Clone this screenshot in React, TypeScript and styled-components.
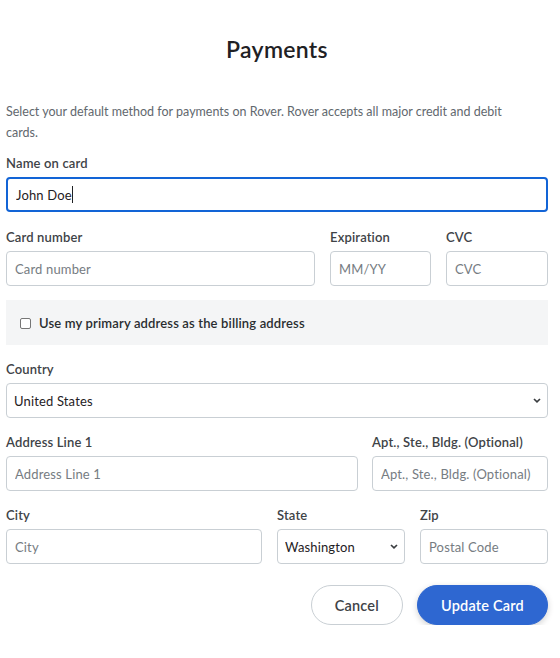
import React from 'react';
import styled, { createGlobalStyle } from 'styled-components';

const GlobalStyle = createGlobalStyle`
  html, body {
    margin: 0;
    padding: 0;
    background: #ffffff;
  }
  body {
    font-family: Lato, 'Open Sans', sans-serif;
    color: #404347;
  }
  * {
    box-sizing: border-box;
  }
`;

const Page = styled.div`
  width: 560px;
  padding: 34px 12px 0 6px;
`;

const Title = styled.h1`
  margin: 0;
  font-size: 23px;
  line-height: 30px;
  font-weight: 600;
  color: #1f2124;
  text-align: center;
  letter-spacing: 0.3px;
`;

const Description = styled.p`
  margin: 37px 0 10px;
  max-width: 500px;
  font-size: 12.5px;
  line-height: 21px;
  color: #62686e;
`;

const Form = styled.form`
  display: flex;
  flex-direction: column;
  gap: 14px;
`;

const Row = styled.div<{ $cols: string; $gap?: number }>`
  display: grid;
  grid-template-columns: ${p => p.$cols};
  column-gap: ${p => p.$gap ?? 15}px;
`;

const Field = styled.div<{ $after?: number }>`
  display: flex;
  flex-direction: column;
  min-width: 0;
  margin-bottom: ${p => p.$after ?? 0}px;
`;

const Label = styled.label`
  font-size: 13px;
  line-height: 20px;
  font-weight: 600;
  letter-spacing: 0.15px;
  color: #404347;
  margin-bottom: 4px;
  white-space: nowrap;
`;

const InputWrap = styled.div`
  position: relative;
`;

const Input = styled.input<{ $active?: boolean }>`
  width: 100%;
  height: 35px;
  padding: 0 8px;
  font-family: Lato, 'Open Sans', sans-serif;
  font-size: 13px;
  letter-spacing: 0.15px;
  color: #1f2124;
  background: #fff;
  border: ${p => (p.$active ? '2px solid #1264d6' : '1px solid #c9cfd4')};
  border-radius: 4px;
  outline: none;
  &::placeholder {
    color: #767c82;
  }
`;

const Caret = styled.span`
  position: absolute;
  left: 66px;
  top: 9px;
  width: 1px;
  height: 17px;
  background: #1f2124;
`;

const Select = styled.select`
  width: 100%;
  height: 35px;
  padding: 0 24px 0 7px;
  font-family: Lato, 'Open Sans', sans-serif;
  font-size: 13px;
  letter-spacing: 0.15px;
  color: #1f2124;
  background: #fff;
  border: 1px solid #c9cfd4;
  border-radius: 4px;
  appearance: none;
  outline: none;
`;

const Chevron = styled.svg`
  position: absolute;
  right: 7px;
  top: 15px;
  pointer-events: none;
`;

const BillingBox = styled.div`
  display: flex;
  align-items: center;
  gap: 8px;
  height: 45px;
  padding: 0 14px;
  background: #f4f5f6;
`;

const Checkbox = styled.span`
  width: 11px;
  height: 11px;
  border: 1px solid #767676;
  border-radius: 2px;
  background: #fff;
  flex: none;
  margin-top: 2px;
`;

const CheckText = styled.span`
  font-size: 13px;
  font-weight: 600;
  letter-spacing: 0.15px;
  color: #2a2d30;
`;

const Actions = styled.div`
  display: flex;
  justify-content: flex-end;
  gap: 14px;
  margin-top: 7px;
`;

const Button = styled.button<{ $primary?: boolean }>`
  height: 40px;
  padding: 0 23px;
  border-radius: 20px;
  font-family: Lato, 'Open Sans', sans-serif;
  font-size: 14.5px;
  font-weight: 600;
  letter-spacing: 0.2px;
  border: 1px solid ${p => (p.$primary ? '#2e67d1' : '#c9cfd4')};
  background: ${p => (p.$primary ? '#2e67d1' : '#ffffff')};
  color: ${p => (p.$primary ? '#ffffff' : '#404347')};
  box-shadow: ${p => (p.$primary ? '0 2px 6px rgba(0,0,0,0.18)' : 'none')};
`;

const SelectField: React.FC<{ value: string }> = ({ value }) => (
  <InputWrap>
    <Select defaultValue={value}>
      <option>{value}</option>
    </Select>
    <Chevron width="8" height="5" viewBox="0 0 8 5">
      <path d="M1 1 L4 3.8 L7 1" fill="none" stroke="#3a3d40" strokeWidth="1.7" />
    </Chevron>
  </InputWrap>
);

export default function App() {
  return (
    <Page>
      <GlobalStyle />
      <Title>Payments</Title>
      <Description>
        Select your default method for payments on Rover. Rover accepts all major credit and debit cards.
      </Description>
      <Form onSubmit={e => e.preventDefault()}>
        <Field $after={1}>
          <Label>Name on card</Label>
          <InputWrap>
            <Input $active defaultValue="John Doe" />
            <Caret />
          </InputWrap>
        </Field>
        <Row $cols="309px 101px 102px">
          <Field>
            <Label>Card number</Label>
            <Input placeholder="Card number" />
          </Field>
          <Field>
            <Label>Expiration</Label>
            <Input placeholder="MM/YY" />
          </Field>
          <Field>
            <Label>CVC</Label>
            <Input placeholder="CVC" />
          </Field>
        </Row>
        <BillingBox>
          <Checkbox />
          <CheckText>Use my primary address as the billing address</CheckText>
        </BillingBox>
        <Field>
          <Label>Country</Label>
          <SelectField value="United States" />
        </Field>
        <Row $cols="352px 176px" $gap={14}>
          <Field>
            <Label>Address Line 1</Label>
            <Input placeholder="Address Line 1" />
          </Field>
          <Field>
            <Label>Apt., Ste., Bldg. (Optional)</Label>
            <Input placeholder="Apt., Ste., Bldg. (Optional)" />
          </Field>
        </Row>
        <Row $cols="256px 128px 128px">
          <Field>
            <Label>City</Label>
            <Input placeholder="City" />
          </Field>
          <Field>
            <Label>State</Label>
            <SelectField value="Washington" />
          </Field>
          <Field>
            <Label>Zip</Label>
            <Input placeholder="Postal Code" />
          </Field>
        </Row>
        <Actions>
          <Button type="button">Cancel</Button>
          <Button type="button" $primary>
            Update Card
          </Button>
        </Actions>
      </Form>
    </Page>
  );
}
